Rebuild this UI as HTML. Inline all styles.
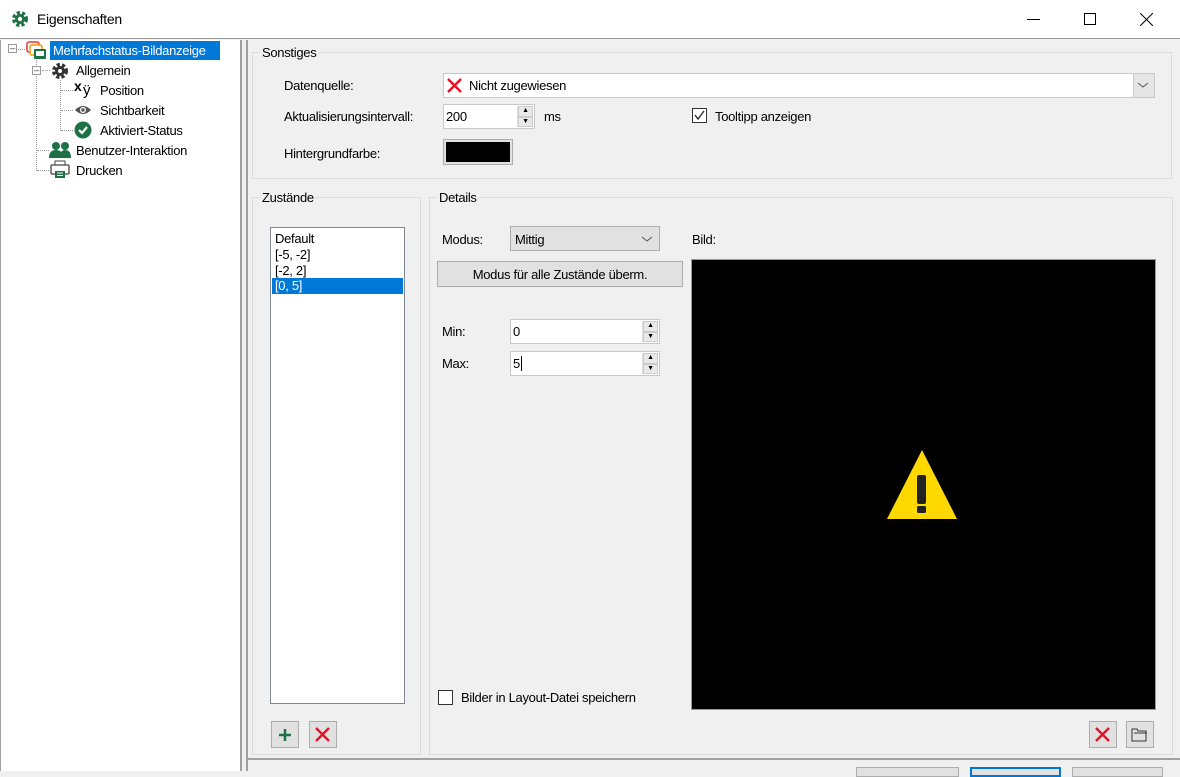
<!DOCTYPE html>
<html><head><meta charset="utf-8"><style>
*{box-sizing:border-box;margin:0;padding:0}
body{width:1180px;height:771px;background:#f0f0f0;font-family:"Liberation Sans",sans-serif;font-size:13px;color:#000;position:relative;overflow:hidden;letter-spacing:-0.3px}
.a{position:absolute}
.grp{position:absolute;border:1px solid #dcdcdc;}
.lbl{position:absolute;background:#f0f0f0;padding:0 2px;top:-8px;left:7px}
.inp{position:absolute;background:#fff;border:1px solid #7a7a7a}
.spin{position:absolute;right:1px;top:1px;width:16px;bottom:1px;border-left:1px solid #ddd}
.spin div{height:50%;border:1px solid #ccc;background:#e8e8e8;font-size:7px;text-align:center;line-height:8px}
.btn{position:absolute;background:#e1e1e1;border:1px solid #adadad}
.dv{position:absolute;width:1px;border-left:1px dotted #999}
.dh{position:absolute;height:1px;border-top:1px dotted #999}
</style></head><body>
<div class="a" style="left:0;top:0;width:1180px;height:39px;background:#fff;border-bottom:1px solid #999"></div>
<svg class="a" style="left:11px;top:10px" width="18" height="18" viewBox="0 0 18 18"><circle cx="9" cy="9" r="6" fill="none" stroke="#1e7145" stroke-width="4" stroke-dasharray="3 2"/><circle cx="9" cy="9" r="5" fill="#1e7145"/><circle cx="9" cy="9" r="2.2" fill="#fff"/></svg>
<div class="a" style="left:37px;top:11px;font-size:14px">Eigenschaften</div>
<div class="a" style="left:1027px;top:19px;width:13px;height:1px;background:#000"></div>
<div class="a" style="left:1084px;top:13px;width:12px;height:12px;border:1px solid #000"></div>
<svg class="a" style="left:1140px;top:13px" width="13" height="13"><path d="M0 0L13 13M13 0L0 13" stroke="#000" stroke-width="1"/></svg>
<div class="a" style="left:0;top:40px;width:242px;height:731px;background:#fff;border-right:2px solid #a0a0a0;border-left:1px solid #a0a0a0"></div>
<div class="a" style="left:246px;top:40px;width:2px;height:731px;background:#a0a0a0"></div>
<div class="a" style="left:246px;top:758px;width:934px;height:2px;background:#a0a0a0"></div>
<div class="dh" style="left:18px;top:49px;width:9px"></div>
<div class="dv" style="left:36px;top:60px;height:111px"></div>
<div class="dh" style="left:42px;top:70px;width:8px"></div>
<div class="dh" style="left:37px;top:150px;width:12px"></div>
<div class="dh" style="left:37px;top:170px;width:12px"></div>
<div class="dv" style="left:60px;top:80px;height:51px"></div>
<div class="dh" style="left:61px;top:90px;width:12px"></div>
<div class="dh" style="left:61px;top:110px;width:12px"></div>
<div class="dh" style="left:61px;top:130px;width:12px"></div>
<div class="a" style="left:8px;top:44px;width:9px;height:9px;border:1px solid #999;background:#fff;font-size:9px;line-height:6px;text-align:center;color:#333">–</div>
<svg class="a" style="left:26px;top:41px" width="22" height="20"><rect x="1" y="1" width="12" height="10" rx="2" fill="none" stroke="#e33" stroke-width="1.5"/><rect x="4" y="4" width="12" height="10" rx="2" fill="#fff" stroke="#f90" stroke-width="1.5"/><rect x="8" y="8" width="12" height="10" rx="1" fill="#1e7145"/><rect x="10" y="10" width="8" height="5" fill="#fff"/></svg>
<div class="a" style="left:50px;top:41px;width:170px;height:19px;background:#0078d7;color:#fff;padding:2px 3px">Mehrfachstatus-Bildanzeige</div>
<div class="a" style="left:32px;top:66px;width:9px;height:9px;border:1px solid #999;background:#fff;font-size:9px;line-height:6px;text-align:center;color:#333">–</div>
<svg class="a" style="left:51px;top:62px" width="18" height="18"><circle cx="9" cy="9" r="6" fill="none" stroke="#333" stroke-width="4" stroke-dasharray="3 2"/><circle cx="9" cy="9" r="5" fill="#333"/><circle cx="9" cy="9" r="2" fill="#fff"/></svg>
<div class="a" style="left:76px;top:63px">Allgemein</div>
<div class="a" style="left:74px;top:78px;font-size:14px;font-weight:bold;letter-spacing:0">x</div><div class="a" style="left:83px;top:82px;font-size:15px">ÿ</div>
<div class="a" style="left:100px;top:83px">Position</div>
<svg class="a" style="left:74px;top:104px" width="18" height="12"><path d="M1 6Q9 -2 17 6Q9 14 1 6Z" fill="#555"/><circle cx="9" cy="6" r="3" fill="#fff"/><circle cx="9" cy="6" r="1.7" fill="#555"/></svg>
<div class="a" style="left:100px;top:103px">Sichtbarkeit</div>
<svg class="a" style="left:74px;top:121px" width="18" height="18"><circle cx="9" cy="9" r="8.5" fill="#1e7145"/><path d="M5 9l3 3 5-6" stroke="#fff" stroke-width="2.2" fill="none"/></svg>
<div class="a" style="left:100px;top:123px">Aktiviert-Status</div>
<svg class="a" style="left:49px;top:141px" width="22" height="18"><circle cx="7" cy="5" r="4" fill="#1e7145"/><circle cx="16" cy="5" r="4" fill="#1e7145"/><path d="M0 17Q0 9 7 9Q14 9 14 17Z M10 17Q11 9 16 9Q22 9 22 17Z" fill="#1e7145"/></svg>
<div class="a" style="left:76px;top:143px">Benutzer-Interaktion</div>
<svg class="a" style="left:50px;top:160px" width="20" height="19"><rect x="5" y="1" width="10" height="5" fill="#fff" stroke="#444"/><rect x="1" y="5" width="18" height="9" rx="1" fill="#fff" stroke="#444" stroke-width="1.3"/><rect x="5" y="11" width="10" height="7" fill="#1e7145"/><path d="M7 13h6M7 15.5h6" stroke="#fff"/></svg>
<div class="a" style="left:76px;top:163px">Drucken</div>
<div class="grp" style="left:252px;top:52px;width:920px;height:127px"><span class="lbl" style="left:7px">Sonstiges</span></div>
<div class="a" style="left:284px;top:78px">Datenquelle:</div>
<div class="inp" style="left:443px;top:73px;width:712px;height:25px;border-color:#c8c8c8"></div>
<svg class="a" style="left:447px;top:78px" width="15" height="15"><path d="M1 1L14 14M14 1L1 14" stroke="#e81123" stroke-width="2.4"/></svg>
<div class="a" style="left:469px;top:78px">Nicht zugewiesen</div>
<div class="a" style="left:1133px;top:74px;width:21px;height:23px;background:#e5e5e5;border-left:1px solid #ccc"></div>
<svg class="a" style="left:1137px;top:81px" width="12" height="8"><path d="M1 2l5 4 5-4" stroke="#555" fill="none"/></svg>
<div class="a" style="left:284px;top:109px">Aktualisierungsintervall:</div>
<div class="inp" style="left:443px;top:104px;width:92px;height:25px;border-color:#c8c8c8"><div class="a" style="left:2px;top:4px">200</div><div class="spin"><div>▲</div><div>▼</div></div></div>
<div class="a" style="left:544px;top:109px">ms</div>
<div class="a" style="left:692px;top:108px;width:15px;height:15px;background:#fff;border:1px solid #333"></div>
<svg class="a" style="left:694px;top:110px" width="11" height="11"><path d="M1 5l3 4 6-8" stroke="#222" fill="none" stroke-width="1.3"/></svg>
<div class="a" style="left:715px;top:109px">Tooltipp anzeigen</div>
<div class="a" style="left:284px;top:146px">Hintergrundfarbe:</div>
<div class="a" style="left:443px;top:139px;width:70px;height:26px;border:1px solid #adadad;background:#e1e1e1;padding:2px"><div style="background:#000;width:100%;height:100%"></div></div>
<div class="grp" style="left:252px;top:197px;width:169px;height:558px"><span class="lbl">Zustände</span></div>
<div class="a" style="left:270px;top:227px;width:135px;height:477px;background:#fff;border:1px solid #828790"></div>
<div class="a" style="left:275px;top:231px;line-height:16px">Default<br>[-5, -2]<br>[-2, 2]</div>
<div class="a" style="left:272px;top:278px;width:131px;height:16px;background:#0078d7;color:#fff;padding-left:3px;line-height:16px">[0, 5]</div>
<div class="btn" style="left:271px;top:721px;width:28px;height:27px"></div>
<svg class="a" style="left:278px;top:728px" width="14" height="14"><path d="M7 1v12M1 7h12" stroke="#1e7145" stroke-width="2.6"/></svg>
<div class="btn" style="left:309px;top:721px;width:28px;height:27px"></div>
<svg class="a" style="left:315px;top:727px" width="15" height="15"><path d="M1 1L14 14M14 1L1 14" stroke="#e81123" stroke-width="2.4"/></svg>
<div class="grp" style="left:429px;top:197px;width:744px;height:558px"><span class="lbl">Details</span></div>
<div class="a" style="left:442px;top:232px">Modus:</div>
<div class="a" style="left:510px;top:226px;width:150px;height:25px;background:#e1e1e1;border:1px solid #adadad;padding:5px 4px">Mittig</div>
<svg class="a" style="left:641px;top:235px" width="12" height="8"><path d="M1 2l5 4 5-4" stroke="#555" fill="none"/></svg>
<div class="btn" style="left:437px;top:261px;width:246px;height:26px;text-align:center;padding-top:5px">Modus für alle Zustände überm.</div>
<div class="a" style="left:692px;top:232px">Bild:</div>
<div class="a" style="left:442px;top:324px">Min:</div>
<div class="inp" style="left:510px;top:319px;width:150px;height:25px;border-color:#c8c8c8"><div class="a" style="left:2px;top:4px">0</div><div class="spin"><div>▲</div><div>▼</div></div></div>
<div class="a" style="left:442px;top:356px">Max:</div>
<div class="inp" style="left:510px;top:351px;width:150px;height:25px;border-color:#c8c8c8"><div class="a" style="left:2px;top:4px">5<span style="border-left:1px solid #000;margin-left:1px"></span></div><div class="spin"><div>▲</div><div>▼</div></div></div>
<div class="a" style="left:691px;top:259px;width:465px;height:451px;background:#000;border:1px solid #999"></div>
<svg class="a" style="left:886px;top:449px" width="74" height="72"><path d="M36 1L71 70H1Z" fill="#ffd800"/><rect x="31" y="26" width="9" height="29" rx="2" fill="#222"/><rect x="31" y="57" width="9" height="7" rx="1.5" fill="#222"/></svg>
<div class="a" style="left:438px;top:690px;width:15px;height:15px;background:#fff;border:1px solid #333"></div>
<div class="a" style="left:461px;top:690px">Bilder in Layout-Datei speichern</div>
<div class="btn" style="left:1089px;top:721px;width:28px;height:27px"></div>
<svg class="a" style="left:1095px;top:727px" width="15" height="15"><path d="M1 1L14 14M14 1L1 14" stroke="#e81123" stroke-width="2.4"/></svg>
<div class="btn" style="left:1126px;top:721px;width:28px;height:27px"></div>
<svg class="a" style="left:1131px;top:727px" width="18" height="15"><path d="M1 2h5l1 2h8v10H1Z M3 6h13" stroke="#333" fill="none"/></svg>
<div class="btn" style="left:856px;top:767px;width:103px;height:10px"></div>
<div class="btn" style="left:970px;top:767px;width:91px;height:10px;border:2px solid #0078d7"></div>
<div class="btn" style="left:1072px;top:767px;width:91px;height:10px"></div>
</body></html>
